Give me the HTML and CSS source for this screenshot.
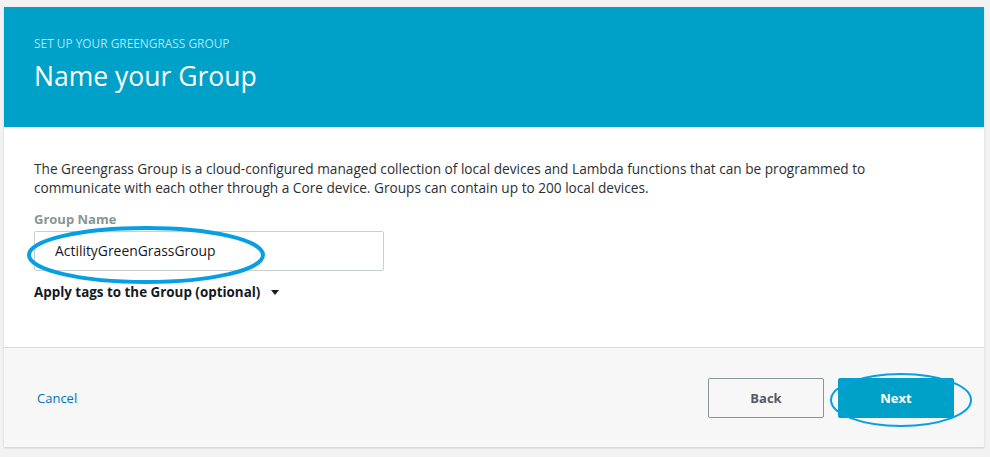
FILE: index.html
```html
<!DOCTYPE html>
<html>
<head>
<meta charset="utf-8">
<link rel="stylesheet" href="styles.css">
</head>
<body>
<div class="card">
  <div class="header">
    <div class="eyebrow">SET UP YOUR GREENGRASS GROUP</div>
    <h1 class="title">Name your Group</h1>
  </div>
  <div class="content">
    <p class="desc">The Greengrass Group is a cloud-configured managed collection of local devices and Lambda functions that can be programmed to communicate with each other through a Core device. Groups can contain up to 200 local devices.</p>
    <label class="label">Group Name</label>
    <div class="field">
      <div class="input">ActilityGreenGrassGroup</div>
      <svg class="ring ring-input" width="240" height="60" viewBox="0 0 240 60"><ellipse cx="120" cy="30" rx="117" ry="27" fill="none" stroke="#079fe3" stroke-width="4"/></svg>
    </div>
    <div class="tags">Apply tags to the Group (optional) <span class="caret"></span></div>
  </div>
  <div class="footer">
    <a class="cancel">Cancel</a>
    <div class="actions">
      <button class="btn back">Back</button>
      <div class="next-wrap">
        <button class="btn next">Next</button>
        <svg class="ring ring-next" width="144" height="56" viewBox="0 0 144 56"><ellipse cx="72" cy="28" rx="70" ry="26" fill="none" stroke="#079fe3" stroke-width="2"/></svg>
      </div>
    </div>
  </div>
</div>
</body>
</html>
```

FILE: styles.css
```css
* { box-sizing: border-box; }
html, body { margin: 0; padding: 0; }
body {
  background: #f2f2f2;
  font-family: "Open Sans", "Noto Sans", sans-serif;
  width: 990px;
  height: 457px;
  padding: 7px 6px 0 4px;
}
.card {
  background: #fff;
  box-shadow: 0 1px 2px rgba(0,0,0,0.15);
  height: 440px;
  display: flex;
  flex-direction: column;
}
.header {
  background: #00a1c9;
  height: 120px;
  padding: 29px 30px 0 30px;
}
.eyebrow {
  color: #a9e7f7;
  font-size: 11.9px;
  line-height: 14px;
}
.title {
  margin: 10px 0 0 0;
  color: #fff;
  font-weight: 400;
  font-size: 26.5px;
  line-height: 32px;
}
.content {
  flex: 1;
  padding: 32px 30px 0 30px;
  border-bottom: 1px solid #d5dbdb;
}
.desc {
  margin: 0;
  font-size: 13.65px;
  line-height: 19px;
  color: #2b2f33;
  width: 860px;
}
.label {
  display: block;
  margin-top: 14px;
  font-size: 13px;
  font-weight: 700;
  color: #879596;
  line-height: 16px;
}
.field {
  position: relative;
  width: 350px;
}
.input {
  margin-top: 4px;
  height: 40px;
  border: 1px solid #c9cfd0;
  border-radius: 2px;
  padding: 0 0 0 20px;
  font-size: 13.9px;
  line-height: 38px;
  color: #16191f;
}
.ring {
  position: absolute;
  pointer-events: none;
}
.ring-input {
  left: -8px;
  top: -6px;
}
.tags {
  margin-top: 12px;
  font-size: 13.4px;
  font-weight: 700;
  color: #16191f;
  line-height: 18px;
  display: flex;
  align-items: center;
}
.caret {
  display: inline-block;
  margin-left: 11px;
  width: 0; height: 0;
  border-left: 4.5px solid transparent;
  border-right: 4.5px solid transparent;
  border-top: 5px solid #16191f;
}
.footer {
  height: 99px;
  background: #f7f7f7;
  display: flex;
  align-items: center;
  justify-content: space-between;
  padding: 0 30px 0 33px;
}
.cancel {
  color: #0073bb;
  font-size: 13px;
}
.actions {
  display: flex;
  gap: 14px;
}
.next-wrap { position: relative; }
.btn {
  width: 116px;
  height: 40px;
  font-family: inherit;
  font-size: 13px;
  font-weight: 700;
  border-radius: 2px;
  padding: 0;
}
.back {
  background: #f7f7f7;
  border: 1px solid #879596;
  color: #545b64;
}
.next {
  background: #00a1c9;
  border: 1px solid #00a1c9;
  color: #fff;
}
.ring-next {
  left: -9px;
  top: -6px;
}
```
